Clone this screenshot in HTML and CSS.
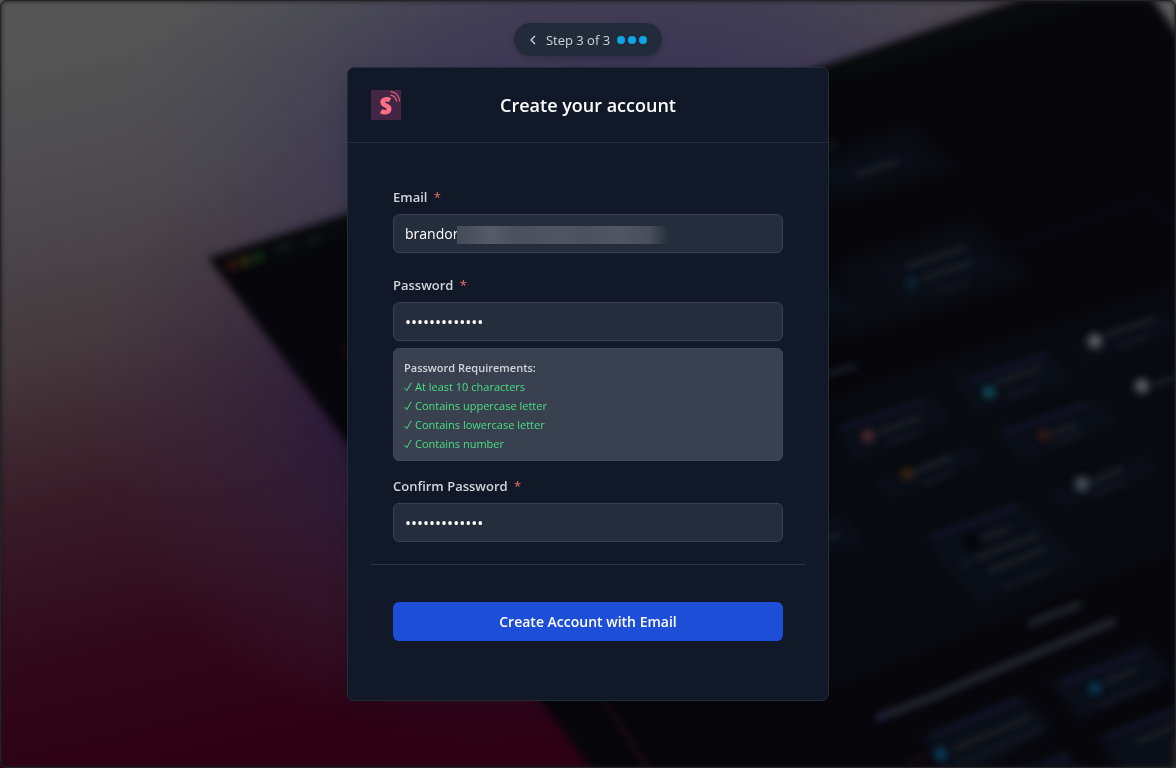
FILE: index.html
```html
<!DOCTYPE html>
<html lang="en">
<head>
<meta charset="utf-8">
<meta name="viewport" content="width=device-width, initial-scale=1">
<title>Create your account</title>
<link rel="stylesheet" href="styles.css">
</head>
<body>
<svg class="backdrop" viewBox="0 0 1176 768" preserveAspectRatio="xMidYMid slice" aria-hidden="true">
  <defs>
    <linearGradient id="sky" gradientUnits="userSpaceOnUse" x1="0" y1="60" x2="170" y2="770">
      <stop offset="0" stop-color="#555555"/>
      <stop offset=".2" stop-color="#4c4a4d"/>
      <stop offset=".4" stop-color="#45393d"/>
      <stop offset=".6" stop-color="#381d27"/>
      <stop offset=".8" stop-color="#310a19"/>
      <stop offset="1" stop-color="#2d0012"/>
    </linearGradient>
    <radialGradient id="violet" gradientUnits="userSpaceOnUse" cx="0" cy="0" r="1" gradientTransform="translate(480 400) scale(390 350)">
      <stop offset="0" stop-color="#271b44"/>
      <stop offset=".35" stop-color="#291a3c" stop-opacity=".85"/>
      <stop offset=".65" stop-color="#302342" stop-opacity=".4"/>
      <stop offset="1" stop-color="#3a2c48" stop-opacity="0"/>
    </radialGradient>
    <radialGradient id="topviolet" gradientUnits="userSpaceOnUse" cx="0" cy="0" r="1" gradientTransform="translate(620 120) scale(500 260)">
      <stop offset="0" stop-color="#352f54"/>
      <stop offset=".5" stop-color="#3d3955" stop-opacity=".75"/>
      <stop offset="1" stop-color="#464757" stop-opacity="0"/>
    </radialGradient>
    <filter id="soft" color-interpolation-filters="sRGB" x="-10%" y="-10%" width="120%" height="120%"><feGaussianBlur stdDeviation="4"/></filter>
    <filter id="fine" color-interpolation-filters="sRGB" x="-10%" y="-10%" width="120%" height="120%"><feGaussianBlur stdDeviation="3"/></filter>
  </defs>
  <rect width="1176" height="768" fill="url(#sky)"/>
  <rect width="1176" height="768" fill="url(#violet)"/>
  <rect width="1176" height="768" fill="url(#topviolet)"/>
  <g filter="url(#soft)">
    <path d="M208 258 340 216 826 65 1030-4 1150-4 1190 42V740L1120 775 600 780Z" fill="#07060b"/>
    <path d="M215 260 340 220 826 69 1030 0 1110 0 826 87 236 275Z" fill="#080a0b"/>
    <path d="M1148-8h40v56z" fill="#5c5c5c"/>
    <path d="M1116 778l70-44v46z" fill="#444"/>
    <path d="M826 400 1176 285V550L826 690Z" fill="#090a0f"/>
    <path d="M826 150 912 126 955 170 826 208ZM836 262 973 218 1032 280 826 345Z" fill="#090b10"/>
    <g fill="#0a0e17">
      <path d="M810 168 905 147 925 162 835 192ZM876 268 965 240 1000 268 906 304ZM800 290 832 284 860 312 800 330Z"/>
      <path d="M1074 344 1160 312 1176 330 1090 362ZM950 376 1048 352 1072 380 976 415ZM834 428 930 396 955 420 855 462ZM992 430 1092 398 1118 422 1020 464Z"/>
      <path d="M874 482 966 444 986 460 890 500ZM1046 494 1140 454 1162 470 1066 508ZM920 536 1016 500 1080 560 978 606ZM820 514 844 514 868 546 810 562Z"/>
      <path d="M1048 680 1145 642 1176 675 1080 720ZM920 736 1020 694 1054 728 950 790ZM1096 738 1176 706V770H1120Z"/>
      <path d="M1016 768 1066 750 1086 775z"/>
    </g>
  </g>
  <g filter="url(#fine)" fill="none" stroke-linecap="round" opacity=".85">
    <path d="M1008 248 1145 200 1176 226" stroke="#0b0b11" stroke-width="5"/>
    <g stroke="#13142a" stroke-width="6">
      <path d="M842 428l80-26M972 380l72-24M1008 432l76-27M934 537l82-30M1064 684l80-32M934 735l84-34M1108 736l68-26M1046 765l20-8"/>
    </g>
    <g stroke="#1d2126" stroke-width="6">
      <path d="M858 174l38-12M908 266l56-18M924 278l46-15M1108 334l44-14M828 374l26-8M998 382l40-13M1156 384l20-7M880 432l40-14M1052 434l22-8M914 472l36-14M1092 482l28-12M982 538l26-9M976 558l60-22M990 571l54-22M828 538l10-4M1106 682l28-12M956 748l72-30M1138 742l38-16"/>
      <path d="M278 248l12-3M310 240l8-2" stroke="#15181a"/>
    </g>
    <path d="M880 717 930 698 970 681 1025 658 1112 622" stroke="#22272c" stroke-width="9"/>
    <path d="M1032 623l46-18" stroke="#1d2327" stroke-width="9"/>
    <g stroke="#151921" stroke-width="5">
      <path d="M938 292l30-10M1120 346l26-9M1010 396l26-9M890 443l28-10M1054 444l28-10M924 484l28-11M1096 494l28-11M1004 587l44-16M1098 706l58-24M956 765l84-36"/>
    </g>
    <path d="M880 717l4-1" stroke="#1e2041" stroke-width="9"/>
    <path d="M910 762l17-6M604 700l42 66M343 345l4 10" stroke="#1c0d11" stroke-width="5"/>
  </g>
  <g filter="url(#soft)" opacity=".85">
    <g opacity=".7"><circle cx="232" cy="265" r="5" fill="#68251f"/><circle cx="245" cy="261" r="5" fill="#65531a"/><circle cx="258" cy="257" r="5" fill="#205b23"/></g>
    <circle cx="912" cy="283" r="5" fill="#103950"/><circle cx="1095" cy="341" r="7" fill="#74767a"/><circle cx="1142" cy="386" r="7" fill="#74767a"/>
    <circle cx="989" cy="392" r="6" fill="#176173"/><circle cx="868" cy="436" r="6" fill="#6a353c"/><circle cx="1044" cy="435" r="5" fill="#592114"/>
    <circle cx="907" cy="474" r="5" fill="#5d3908"/><circle cx="1082" cy="484" r="7" fill="#59616c"/><circle cx="972" cy="542" r="7" fill="#020305"/>
    <circle cx="966" cy="563" r="4" fill="#14263d"/><circle cx="1095" cy="688" r="6" fill="#0d486e"/><circle cx="941" cy="754" r="6" fill="#0b5078"/><circle cx="832" cy="144" r="4" fill="#25292c"/>
  </g>
</svg>
<main class="page">
  <nav class="steps" aria-label="Progress">
    <button class="back" type="button" aria-label="Back"><svg viewBox="0 0 12 12" width="12" height="12"><path d="M8 2 4 6l4 4" fill="none" stroke="currentColor" stroke-width="1.3"/></svg></button>
    <span>Step 3 of 3</span>
    <span class="dots"><i></i><i></i><i></i></span>
  </nav>
  <section class="card">
    <header class="card-head">
      <svg class="logo" viewBox="0 0 30 30" role="img" aria-label="Logo">
        <path d="M0 0h30v30H0z" fill="#432546"/>
        <path d="M19 10.200C16.500 8.700 11.600 8.900 11.600 12.300c0 3.600 6.600 2.900 6.600 6.400 0 4-5.200 4.100-8.200 2.500" fill="none" stroke="#ff6f83" stroke-width="4.600"/>
        <path d="M19.500 1.500c5 .6 8.500 4.500 9.200 10M19.500 5c3.200.6 5.500 3 6.200 6.500" fill="none" stroke="#f0667f" stroke-width="1.200"/>
      </svg>
      <h1>Create your account</h1>
    </header>
    <form class="form">
      <div class="fields">
        <div class="field">
          <label for="email">Email <b>*</b></label>
          <div class="control"><input id="email" type="text" value="brandon"><span class="redaction"></span></div>
        </div>
        <div class="field">
          <label for="password">Password <b>*</b></label>
          <input id="password" class="secret" type="password" value="Abcdefghij123">
        </div>
        <div class="rules">
          <strong>Password Requirements:</strong>
          <ul>
            <li><svg viewBox="0 0 8 10"><path d="M.7 6 2.700 8.800 7.300.8"/></svg>At least 10 characters</li>
            <li><svg viewBox="0 0 8 10"><path d="M.7 6 2.700 8.800 7.300.8"/></svg>Contains uppercase letter</li>
            <li><svg viewBox="0 0 8 10"><path d="M.7 6 2.700 8.800 7.300.8"/></svg>Contains lowercase letter</li>
            <li><svg viewBox="0 0 8 10"><path d="M.7 6 2.700 8.800 7.300.8"/></svg>Contains number</li>
          </ul>
        </div>
        <div class="field">
          <label for="confirm">Confirm Password <b>*</b></label>
          <input id="confirm" class="secret" type="password" value="Abcdefghij123">
        </div>
      </div>
      <div class="actions"><button class="submit" type="button">Create Account with Email</button></div>
    </form>
  </section>
</main>
</body>
</html>
```
FILE: styles.css
```css
* { box-sizing: border-box; }
body {
  margin: 0;
  min-height: 100vh;
  background: #29292d;
  color: #d1d5db;
  font-family: "Open Sans", "Noto Sans", sans-serif;
  font-size: 13px;
}
.backdrop {
  position: fixed;
  inset: 0;
  width: 100%;
  height: 100%;
}
body::after {
  content: "";
  position: fixed;
  inset: 0;
  border: 1px solid #242428;
  box-shadow: inset 0 0 5px #1a1a1e;
  border-radius: 6px;
  pointer-events: none;
}
.page {
  position: relative;
  display: flex;
  flex-direction: column;
  align-items: center;
  gap: 11px;
  padding: 23px 16px;
}
.steps {
  display: flex;
  align-items: center;
  gap: 7px;
  height: 33px;
  padding: 0 15px 0 13px;
  border-radius: 17px;
  background: #222b3a;
  box-shadow: 0 2px 6px rgba(0, 0, 0, .2);
}
.back {
  display: flex;
  padding: 0;
  border: 0;
  background: none;
  color: #d1d5db;
}
.dots { display: flex; gap: 3px; }
.dots i {
  width: 8px;
  height: 8px;
  border-radius: 50%;
  background: #0ea5e9;
}
.card {
  width: 100%;
  max-width: 482px;
  border: 1px solid #222d3c;
  border-radius: 7px;
  background: #111827;
  box-shadow: 0 8px 20px rgba(0, 0, 0, .15);
}
.card-head {
  display: grid;
  grid-template-columns: 30px 1fr 30px;
  align-items: center;
  padding: 22px 23px;
  border-bottom: 1px solid #222d3c;
}
.logo { width: 30px; height: 30px; }
h1 {
  margin: 0;
  color: #fff;
  font-size: 18px;
  font-weight: 600;
  line-height: 30px;
  text-align: center;
}
.form { padding: 22px 23px; }
.fields {
  padding: 22px;
  border-bottom: 1px solid #29374a;
}
.field label {
  display: block;
  margin-bottom: 7px;
  font-weight: 600;
  line-height: 20px;
}
.field b {
  margin-left: 3px;
  color: #f87171;
  font-weight: 400;
}
.field + .field { margin-top: 22px; }
.control { position: relative; }
input {
  display: block;
  width: 100%;
  height: 39px;
  padding: 0 11px;
  border: 1px solid #374151;
  border-radius: 6px;
  background: #242d3b;
  color: #fff;
  font: 14px "Open Sans", "Noto Sans", sans-serif;
}
.secret { font-size: 16px; }
.redaction {
  position: absolute;
  top: 12px;
  left: 64px;
  width: 212px;
  height: 18px;
  background: linear-gradient(90deg, #444b58, #555b67 16%, #4a505c 28%, #505661 50%, #4b515d 60%, #515762 77%, #484e5a 91%, #242d3b);
}
.rules {
  margin: 7px 0 15px;
  padding: 9px 10px 7px;
  border: 1px solid #3d4757;
  border-radius: 6px;
  background: #394150;
  font-size: 11px;
  line-height: 19px;
}
.rules strong { display: block; font-weight: 600; }
.rules ul {
  margin: 0;
  padding: 0;
  list-style: none;
  color: #4ade80;
}
.rules li {
  display: flex;
  align-items: center;
  gap: 3px;
}
.rules svg {
  width: 8px;
  height: 10px;
  fill: none;
  stroke: currentColor;
}
.actions { padding: 37px 22px; }
.submit {
  display: block;
  width: 100%;
  height: 39px;
  border: 0;
  border-radius: 6px;
  background: #1d4ed8;
  color: #fff;
  font: 600 14px "Open Sans", "Noto Sans", sans-serif;
}
```
